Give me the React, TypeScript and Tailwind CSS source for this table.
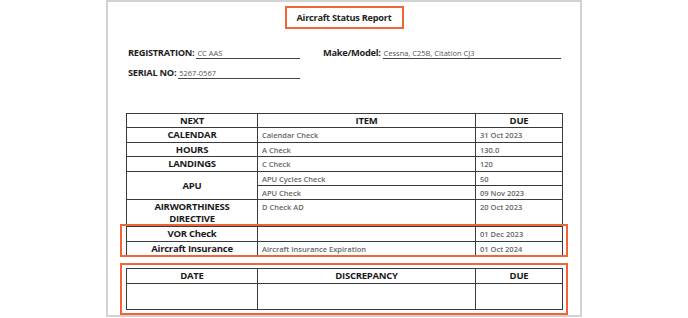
import React from "react";

const font = { fontFamily: '"Open Sans", "Noto Sans", sans-serif' };

function HeadCell({ children, rowSpan }: { children?: React.ReactNode; rowSpan?: number }) {
  return (
    <td rowSpan={rowSpan} className="border border-[#3a3a3a] text-center align-middle text-[9.5px] font-bold tracking-[-0.25px] leading-[12px] text-[#1a1a1a] p-0 whitespace-nowrap">
      {children}
    </td>
  );
}

function ValCell({ children }: { children?: React.ReactNode }) {
  return (
    <td className="border border-[#3a3a3a] text-left align-middle pl-[4px] text-[7.5px] font-semibold leading-[10px] text-[#666] p-0 whitespace-nowrap">
      {children}
    </td>
  );
}

function TopValCell({ children }: { children?: React.ReactNode }) {
  return (
    <td className="border border-[#3a3a3a] text-left align-top pt-[2px] pl-[4px] text-[7.5px] font-semibold leading-[10px] text-[#666] whitespace-nowrap">
      {children}
    </td>
  );
}

function Field({ label, value, width }: { label: string; value: string; width: string }) {
  return (
    <div className={`flex items-end ${width}`}>
      <span className="text-[9.3px] font-bold tracking-[-0.3px] leading-[12px] text-[#1f1f1f] whitespace-nowrap">{label}</span>
      <span className="ml-[2px] flex-1 border-b border-[#444] text-[7.5px] leading-[10px] text-[#555] pl-[1px] whitespace-nowrap">{value}</span>
    </div>
  );
}

export default function App() {
  return (
    <div className="w-[688px] h-[318px] bg-white flex justify-center" style={font}>
      <div className="w-[476px] h-[317px] border-2 border-[#d2d2d2] flex flex-col">
        <div className="mt-[4px] mx-auto w-[119px] h-[24px] border-2 border-[#f0643a] flex items-center justify-center text-[9.2px] font-bold tracking-[-0.25px] text-[#1f1f1f] whitespace-nowrap">
          Aircraft Status Report
        </div>

        <div className="mt-[16px] ml-[20px] flex flex-col gap-[6px]">
          <div className="flex items-end h-[14px] gap-[23px]">
            <Field label="REGISTRATION:" value="CC AAS" width="w-[172px]" />
            <Field label="Make/Model:" value="Cessna, C25B, Citation CJ3" width="w-[238px]" />
          </div>
          <div className="flex items-end h-[14px]">
            <Field label="SERIAL NO:" value="5267-0567" width="w-[172px]" />
          </div>
        </div>

        <div className="relative mt-[34px] ml-[18px] w-[436px]">
          <table className="w-[436px] table-fixed border-collapse">
            <colgroup>
              <col className="w-[131px]" />
              <col className="w-[218px]" />
              <col className="w-[87px]" />
            </colgroup>
            <tbody>
              <tr className="h-[14px]">
                <HeadCell>NEXT</HeadCell>
                <HeadCell>ITEM</HeadCell>
                <HeadCell>DUE</HeadCell>
              </tr>
              <tr className="h-[15px]">
                <HeadCell>CALENDAR</HeadCell>
                <ValCell>Calendar Check</ValCell>
                <ValCell>31 Oct 2023</ValCell>
              </tr>
              <tr className="h-[14px]">
                <HeadCell>HOURS</HeadCell>
                <ValCell>A Check</ValCell>
                <ValCell>130.0</ValCell>
              </tr>
              <tr className="h-[15px]">
                <HeadCell>LANDINGS</HeadCell>
                <ValCell>C Check</ValCell>
                <ValCell>120</ValCell>
              </tr>
              <tr className="h-[14px]">
                <HeadCell rowSpan={2}>APU</HeadCell>
                <ValCell>APU Cycles Check</ValCell>
                <ValCell>50</ValCell>
              </tr>
              <tr className="h-[14px]">
                <ValCell>APU Check</ValCell>
                <ValCell>09 Nov 2023</ValCell>
              </tr>
              <tr className="h-[27px]">
                <td className="border border-[#3a3a3a] text-center align-top pt-[1px] text-[9.5px] font-bold tracking-[-0.25px] leading-[12px] text-[#1a1a1a]">
                  <div>AIRWORTHINESS</div>
                  <div>DIRECTIVE</div>
                </td>
                <TopValCell>D Check AD</TopValCell>
                <TopValCell>20 Oct 2023</TopValCell>
              </tr>
              <tr className="h-[15px]">
                <HeadCell>VOR Check</HeadCell>
                <ValCell></ValCell>
                <ValCell>01 Dec 2023</ValCell>
              </tr>
              <tr className="h-[14px]">
                <HeadCell>Aircraft Insurance</HeadCell>
                <ValCell>Aircraft Insurance Expiration</ValCell>
                <ValCell>01 Oct 2024</ValCell>
              </tr>
            </tbody>
          </table>
          <div className="absolute left-[-6px] right-[-6px] top-[111px] h-[33px] border-2 border-[#f0643a] pointer-events-none" />
        </div>

        <div className="mt-[7px] ml-[12px] w-[448px] border-2 border-[#f0643a] px-[4px] py-[3px]">
          <table className="w-[436px] table-fixed border-collapse">
            <colgroup>
              <col className="w-[131px]" />
              <col className="w-[218px]" />
              <col className="w-[87px]" />
            </colgroup>
            <tbody>
              <tr className="h-[15px]">
                <HeadCell>DATE</HeadCell>
                <HeadCell>DISCREPANCY</HeadCell>
                <HeadCell>DUE</HeadCell>
              </tr>
              <tr className="h-[26px]">
                <td className="border border-[#3a3a3a]" />
                <td className="border border-[#3a3a3a]" />
                <td className="border border-[#3a3a3a]" />
              </tr>
            </tbody>
          </table>
        </div>
      </div>
    </div>
  );
}
